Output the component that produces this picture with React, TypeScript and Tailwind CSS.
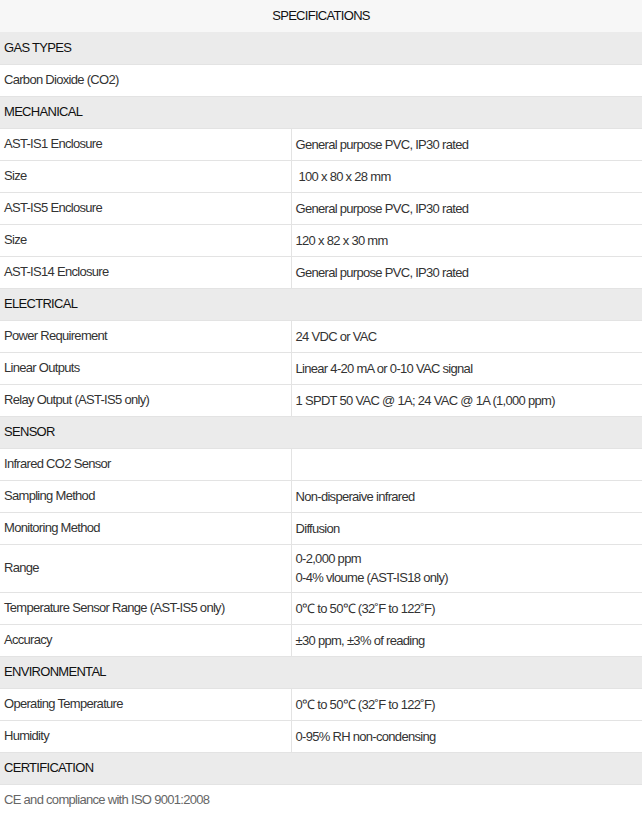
type Row =
  | { kind: "section"; label: string }
  | { kind: "single"; label: string; muted?: boolean }
  | { kind: "pair"; label: string; value: string[] };

const ROWS: Row[] = [
  { kind: "section", label: "GAS TYPES" },
  { kind: "single", label: "Carbon Dioxide (CO2)" },
  { kind: "section", label: "MECHANICAL" },
  { kind: "pair", label: "AST-IS1 Enclosure", value: ["General purpose PVC, IP30 rated"] },
  { kind: "pair", label: "Size", value: ["\u00a0100 x 80 x 28 mm"] },
  { kind: "pair", label: "AST-IS5 Enclosure", value: ["General purpose PVC, IP30 rated"] },
  { kind: "pair", label: "Size", value: ["120 x 82 x 30 mm"] },
  { kind: "pair", label: "AST-IS14 Enclosure", value: ["General purpose PVC, IP30 rated"] },
  { kind: "section", label: "ELECTRICAL" },
  { kind: "pair", label: "Power Requirement", value: ["24 VDC or VAC"] },
  { kind: "pair", label: "Linear Outputs", value: ["Linear 4-20 mA or 0-10 VAC signal"] },
  { kind: "pair", label: "Relay Output (AST-IS5 only)", value: ["1 SPDT 50 VAC @ 1A; 24 VAC @ 1A (1,000 ppm)"] },
  { kind: "section", label: "SENSOR" },
  { kind: "pair", label: "Infrared CO2 Sensor", value: [""] },
  { kind: "pair", label: "Sampling Method", value: ["Non-disperaive infrared"] },
  { kind: "pair", label: "Monitoring Method", value: ["Diffusion"] },
  { kind: "pair", label: "Range", value: ["0-2,000 ppm", "0-4% vloume (AST-IS18 only)"] },
  { kind: "pair", label: "Temperature Sensor Range (AST-IS5 only)", value: ["0\u2103 to 50\u2103 (32\u02daF to 122\u02daF)"] },
  { kind: "pair", label: "Accuracy", value: ["\u00b130 ppm, \u00b13% of reading"] },
  { kind: "section", label: "ENVIRONMENTAL" },
  { kind: "pair", label: "Operating Temperature", value: ["0\u2103 to 50\u2103 (32\u02daF to 122\u02daF)"] },
  { kind: "pair", label: "Humidity", value: ["0-95% RH non-condensing"] },
  { kind: "section", label: "CERTIFICATION" },
  { kind: "single", label: "CE and compliance with ISO 9001:2008", muted: true },
];

function SpecRow({ row }: { row: Row }) {
  if (row.kind === "section") {
    return (
      <tr className="h-8 bg-[#ebebeb] border-b border-[#e3e3e3]">
        <td colSpan={2} className="px-1 text-[#111]">
          {row.label}
        </td>
      </tr>
    );
  }
  if (row.kind === "single") {
    return (
      <tr className="h-8 bg-white border-b border-[#e3e3e3]">
        <td colSpan={2} className={`px-1 ${row.muted ? "text-[#666]" : "text-[#333]"}`}>
          {row.label}
        </td>
      </tr>
    );
  }
  return (
    <tr className={`${row.value.length > 1 ? "h-12" : "h-8"} bg-white border-b border-[#e3e3e3]`}>
      <td className="px-1 border-r border-[#e3e3e3] text-[#333]">{row.label}</td>
      <td className="px-1 text-[#333] leading-[19px]">
        {row.value.map((line, i) => (
          <div key={i}>{line}</div>
        ))}
      </td>
    </tr>
  );
}

export default function App() {
  return (
    <div className="w-[642px] bg-white font-['Liberation_Sans',Arial,sans-serif] text-[13px] tracking-[-0.7px]">
      <table className="w-full border-collapse table-fixed">
        <colgroup>
          <col className="w-[291px]" />
          <col />
        </colgroup>
        <thead>
          <tr className="h-8 bg-[#f7f7f7]">
            <th colSpan={2} className="font-normal text-[#111] text-center">
              SPECIFICATIONS
            </th>
          </tr>
        </thead>
        <tbody>
          {ROWS.map((row, i) => (
            <SpecRow key={i} row={row} />
          ))}
        </tbody>
      </table>
    </div>
  );
}
